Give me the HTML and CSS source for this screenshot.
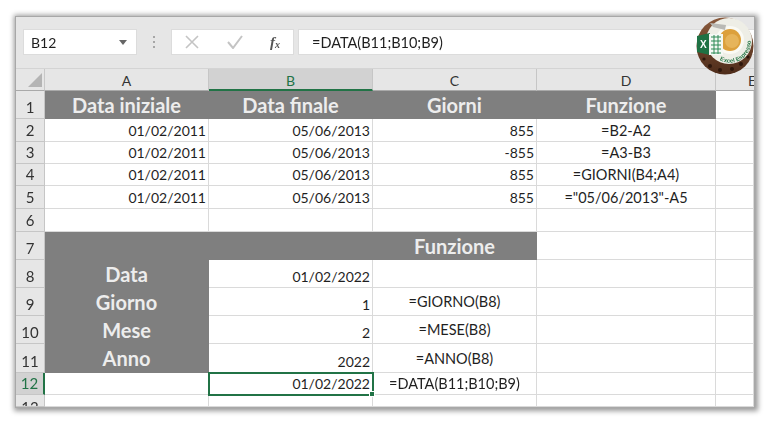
FILE: index.html
```html
<!DOCTYPE html>
<html lang="it">
<head>
<meta charset="utf-8">
<title>Funzioni data</title>
<link rel="stylesheet" href="styles.css">
</head>
<body>
<main class="window">
  <div class="formula-bar">
    <div class="name-box"><span>B12</span><i class="caret"></i></div>
    <svg class="grip" width="4" height="14" viewBox="0 0 4 14"><path d="M1 1h2v2H1zM1 6h2v2H1zM1 11h2v2H1z" fill="#a6a6a6"/></svg>
    <div class="fx-box">
      <svg width="14" height="14" viewBox="0 0 14 14"><path d="M1 1l12 12M13 1L1 13" stroke="#c4c4c4" stroke-width="1.6" fill="none"/></svg>
      <svg width="18" height="14" viewBox="0 0 18 14"><path d="M2 7l5 6L16 1" stroke="#c4c4c4" stroke-width="2" fill="none"/></svg>
      <span class="fx">f<sub>x</sub></span>
    </div>
    <div class="formula-input">=DATA(B11;B10;B9)</div>
  </div>
  <div class="sheet">
    <div class="corner"><svg width="14" height="14" viewBox="0 0 14 14"><path d="M14 0v14H0z" fill="#b4b4b4"/></svg></div>
    <div class="col">A</div><div class="col col-on">B</div><div class="col">C</div><div class="col">D</div><div class="col col-e">E</div>

    <div class="row">1</div><div class="cell head">Data iniziale</div><div class="cell head">Data finale</div><div class="cell head">Giorni</div><div class="cell head">Funzione</div><div class="cell"></div>

    <div class="row">2</div><div class="cell num">01/02/2011</div><div class="cell num">05/06/2013</div><div class="cell num">855</div><div class="cell mid">=B2-A2</div><div class="cell"></div>
    <div class="row">3</div><div class="cell num">01/02/2011</div><div class="cell num">05/06/2013</div><div class="cell num">-855</div><div class="cell mid">=A3-B3</div><div class="cell"></div>
    <div class="row">4</div><div class="cell num">01/02/2011</div><div class="cell num">05/06/2013</div><div class="cell num">855</div><div class="cell mid">=GIORNI(B4;A4)</div><div class="cell"></div>
    <div class="row">5</div><div class="cell num">01/02/2011</div><div class="cell num">05/06/2013</div><div class="cell num">855</div><div class="cell mid">="05/06/2013"-A5</div><div class="cell"></div>
    <div class="row">6</div><div class="cell"></div><div class="cell"></div><div class="cell"></div><div class="cell"></div><div class="cell"></div>

    <div class="row">7</div><div class="cell grey span2"></div><div class="cell head">Funzione</div><div class="cell"></div><div class="cell"></div>
    <div class="row">8</div><div class="cell head side">Data</div><div class="cell num">01/02/2022</div><div class="cell"></div><div class="cell"></div><div class="cell"></div>
    <div class="row">9</div><div class="cell head side">Giorno</div><div class="cell num">1</div><div class="cell mid up">=GIORNO(B8)</div><div class="cell"></div><div class="cell"></div>
    <div class="row">10</div><div class="cell head side">Mese</div><div class="cell num">2</div><div class="cell mid up">=MESE(B8)</div><div class="cell"></div><div class="cell"></div>
    <div class="row">11</div><div class="cell head side">Anno</div><div class="cell num">2022</div><div class="cell mid up">=ANNO(B8)</div><div class="cell"></div><div class="cell"></div>
    <div class="row row-on">12</div><div class="cell"></div><div class="cell num selected">01/02/2022<i class="handle"></i></div><div class="cell mid">=DATA(B11;B10;B9)</div><div class="cell"></div><div class="cell"></div>
    <div class="row row-cut">13</div><div class="cell"></div><div class="cell"></div><div class="cell"></div><div class="cell"></div><div class="cell"></div>
  </div>
  <svg class="logo" width="58" height="58" viewBox="0 0 58 58">
    <defs>
      <path id="arc" d="M22 42A21 21 0 0 0 53 16"/>
      <linearGradient id="beans" x1="0" y1="0" x2="0" y2="1"><stop offset="0" stop-color="#8a5a3c"/><stop offset="1" stop-color="#4e2c1a"/></linearGradient>
    </defs>
    <circle cx="29" cy="29" r="28.5" fill="url(#beans)"/>
    <g fill="#2e170c"><circle cx="14" cy="49" r="2"/><circle cx="24" cy="53" r="2"/><circle cx="36" cy="52" r="2"/><circle cx="45" cy="47" r="2"/><circle cx="8" cy="42" r="1.6"/><circle cx="52" cy="40" r="1.6"/></g>
    <circle cx="33" cy="24" r="23" fill="#eeeee6"/>
    <circle cx="34" cy="23" r="14" fill="#fafaf4"/>
    <circle cx="34" cy="23" r="11" fill="#dca03c"/>
    <circle cx="36" cy="24" r="7" fill="#e6b45a"/>
    <path d="M14 6l16 2-1 5-12-3z" fill="#b9b9b4"/>
    <path d="M1 19L14 16v22L1 35z" fill="#1f7244"/>
    <path d="M13 17h14v21H13z" fill="#f4f8f4"/>
    <path d="M15 20h10M15 24h10M15 28h10M15 32h10M15 36h10M18 18v19M22 18v19" stroke="#2c8a55" stroke-width="1" fill="none"/>
    <text class="logo-x" x="4" y="31">X</text>
    <text class="logo-text"><textPath href="#arc" startOffset="2">Excel Espresso</textPath></text>
  </svg>
</main>
</body>
</html>
```
FILE: styles.css
```css
* { box-sizing: border-box; }
html, body { margin: 0; height: 100%; background: #fff; overflow: hidden; }
body { padding: 17px 14px 14px 16px; font-family: Lato, "Liberation Sans", sans-serif; color: #1f1f1f; }
.window {
  position: relative;
  width: 738px;
  height: 390px;
  background: #e6e6e6;
  box-shadow: 0 0 0 1px #a8a8a8, 1px 1px 5px 3px #9a9a9a;
  filter: blur(0.35px);
}
.formula-bar {
  height: 52px;
  padding: 12px 0 13px 7px;
  display: flex;
  align-items: stretch;
  border-bottom: 1px solid #d4d4d4;
}
.name-box {
  width: 114px;
  background: #fff;
  border: 1px solid #dcdcdc;
  display: flex;
  align-items: center;
  justify-content: space-between;
  padding: 0 9px 0 7px;
  font-size: 14px;
}
.caret { width: 0; height: 0; border: 4px solid transparent; border-top: 5px solid #666; border-bottom: 0; }
.grip { align-self: center; margin: 0 15px; }
.fx-box {
  width: 123px;
  background: #fff;
  border: 1px solid #dcdcdc;
  display: flex;
  align-items: center;
  justify-content: space-between;
  padding: 0 13px;
}
.fx { font-family: "Liberation Serif", serif; font-style: italic; font-size: 15px; color: #555; font-weight: 700; }
.fx sub { font-size: 10px; vertical-align: -1px; line-height: 0; }
.formula-input {
  flex: 1;
  margin-left: 4px;
  background: #fff;
  border: 1px solid #dcdcdc;
  border-right: 0;
  display: flex;
  align-items: center;
  padding-left: 13px;
  font-size: 14.5px;
}
.sheet {
  display: grid;
  grid-template-columns: 29px 164px 164px 164px 179px 38px;
  grid-template-rows: 22px 28px 23px 22px 22px 23px 23px 28px 28px 28px 28px 29px 22px 12px;
  height: 338px;
  overflow: hidden;
  background: #fff;
  font-size: 14px;
}
.corner, .col, .row { background: #e6e6e6; display: flex; justify-content: center; color: #333; }
.corner { align-items: flex-end; justify-content: flex-end; padding: 0 2px 3px 0; border-bottom: 1px solid #a9a9a9; border-right: 1px solid #c8c8c8; }
.col { align-items: center; border-right: 1px solid #c6c6c6; border-bottom: 1px solid #a9a9a9; font-size: 14px; padding-top: 2px; }
.col-on { background: #d2d2d2; color: #217346; border-bottom: 2px solid #217346; }
.col-e { justify-content: flex-start; padding-left: 32px; overflow: hidden; border-right: 0; }
.row { align-items: flex-end; border-bottom: 1px solid #c6c6c6; border-right: 1px solid #c6c6c6; font-size: 15px; padding-bottom: 1px; line-height: 19px; overflow: hidden; }
.row-on { background: #d2d2d2; color: #217346; border-right: 2px solid #217346; align-items: center; padding: 0; }
.row-cut { align-items: flex-start; padding: 5px 0 0; line-height: 14px; }
.cell {
  background: #fff;
  border-right: 1px solid #dadada;
  border-bottom: 1px solid #dadada;
  display: flex;
  align-items: flex-end;
  line-height: 20px;
  min-width: 0;
  white-space: nowrap;
}
.num { justify-content: flex-end; padding-right: 2px; font-size: 14px; }
.mid { justify-content: center; font-size: 14.5px; }
.up { padding-bottom: 3px; }
.head {
  background: #7f7f7f;
  border-color: #7f7f7f;
  color: #ededed;
  font-weight: 700;
  font-size: 20px;
  justify-content: center;
  align-items: center;
  padding-top: 1px;
}
.grey { background: #7f7f7f; border-color: #7f7f7f; }
.span2 { grid-column: span 2; }
.side { align-items: flex-start; padding-top: 3px; line-height: 22px; }
.selected { position: relative; outline: 2px solid #217346; outline-offset: -1px; z-index: 1; }
.handle { position: absolute; right: -3px; bottom: -3px; width: 4px; height: 4px; background: #217346; border: 1px solid #fff; box-sizing: content-box; }
.logo { position: absolute; left: 680px; top: 0; }
.logo-x { font: 700 10px "Liberation Sans", sans-serif; fill: #fff; }
.logo-text { font: 700 6px "Liberation Sans", sans-serif; fill: #2d7a4a; }
```
